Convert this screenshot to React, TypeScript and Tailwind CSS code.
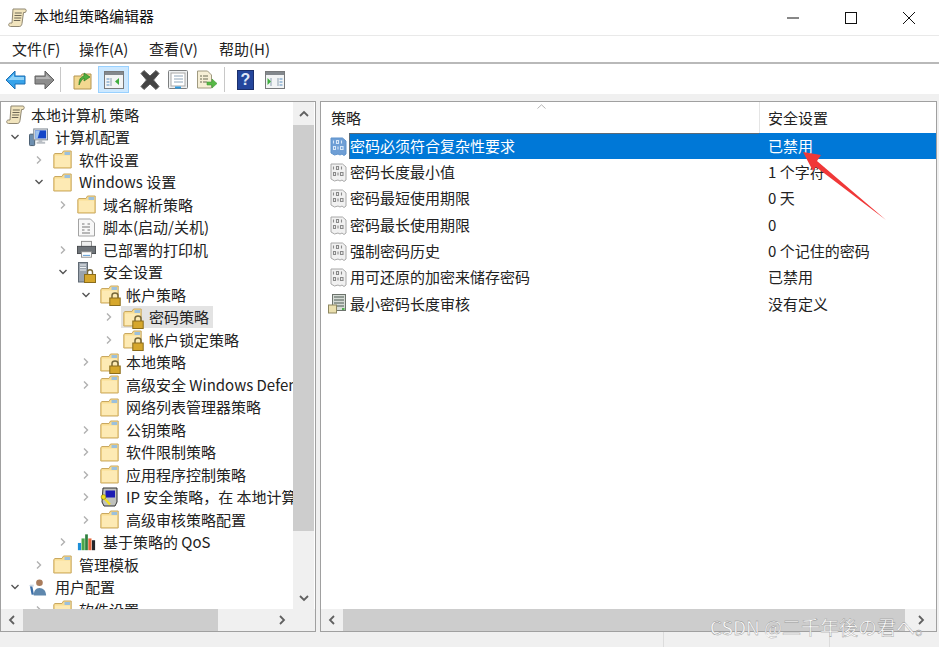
const levels = ["pl-[5px]", "pl-[7px]", "pl-[31px]", "pl-[55px]", "pl-[78px]", "pl-[101px]"];

function ScrollIcon() {
  return (
    <svg width="19" height="19" viewBox="0 0 19 19">
      <path d="M5 1h12c1.500 0 1.800 3 0 3.500h-1.500L14 15.500c-.3 2-1.200 3-2.800 3H2.500c-2.300 0-2.500-3.500 0-3.500H4z" fill="#f1e4bd" stroke="#8f8772" />
      <path d="M6.800 5h7M6.500 7.500h7M6.200 10h7M5.800 12.500h6.500" stroke="#6f6856" strokeWidth="1.100" />
    </svg>
  );
}

function Folder({ lock }: { lock?: boolean }) {
  return (
    <svg width="19" height="19" viewBox="0 0 19 19" className="overflow-visible">
      <path d="M.8 4.500V18h17.400V1H10.500L9 3.500H2z" fill="#f9dd92" stroke="#c9a860" />
      <path d="M2 5.500h15V17H2z" fill="#fdeab4" />
      <path d="M11.500 2h5.700v3h-5.700z" fill="#9cc0dc" />
      {lock && (
        <g>
          <path d="M12 13v-2.500c0-3.300 6-3.300 6 0V13" fill="none" stroke="#77683a" strokeWidth="1.500" />
          <rect x="9.800" y="13" width="10.400" height="7.500" fill="#d6a72c" stroke="#8b6d1c" />
        </g>
      )}
    </svg>
  );
}

function Computer() {
  return (
    <svg width="20" height="19" viewBox="0 0 20 19">
      <rect x="0.500" y="6" width="5.500" height="12" rx="1" fill="#6d8fb0" stroke="#44586c" />
      <rect x="5" y="0.500" width="14.500" height="11.500" fill="#e2e6ea" stroke="#7d8790" />
      <path d="M6.500 2h11.500v8.500H6.500z" fill="#1546c8" />
      <path d="M6.500 2h5l-2.500 8.500H6.500z" fill="#9ec2ee" />
      <path d="M10 12h4v2h3v2H8v-2h2z" fill="#b9bec4" />
    </svg>
  );
}

function ScriptDoc() {
  return (
    <svg width="19" height="19" viewBox="0 0 19 19">
      <path d="M1.500 1h12l4 4v13h-16z" fill="#f8f8f8" stroke="#a3a3a3" />
      <path d="M5 6h2.500M10.500 6h2.500M5 9h8M5 12h2.500M10.500 12h2.500M5 15h8" stroke="#777" />
    </svg>
  );
}

function Printer() {
  return (
    <svg width="21" height="19" viewBox="0 0 21 19">
      <rect x="5" y="0.500" width="11" height="7" fill="#efefef" stroke="#888" />
      <rect x="0.500" y="6" width="20" height="8" fill="#6e7378" stroke="#45484c" />
      <rect x="5" y="12" width="11" height="6" fill="#fff" stroke="#888" />
      <path d="M6.500 16h8" stroke="#4a90d0" />
    </svg>
  );
}

function ServerLock() {
  return (
    <svg width="19" height="21" viewBox="0 0 19 21">
      <rect x="1.500" y="0.500" width="9" height="19.500" fill="#9aa3ad" stroke="#616a74" />
      <path d="M3 3h6M3 5.500h6M3 8h6" stroke="#eef1f4" />
      <path d="M10.500 12.500v-2.500c0-3 5-3 5 0v2.500" fill="none" stroke="#77683a" strokeWidth="1.400" />
      <rect x="7.500" y="12.500" width="11" height="8" fill="#d6a72c" stroke="#8b6d1c" />
    </svg>
  );
}

function IpKey() {
  return (
    <svg width="19" height="20" viewBox="0 0 19 20">
      <path d="M3 1h14v14l-2 4H4l-2-4z" fill="#bfc1bd" stroke="#333" />
      <rect x="5.500" y="3.500" width="9.500" height="7" fill="#1c1cb4" />
      <path d="M2 9l3 3 5 5.500" stroke="#f2e01e" strokeWidth="2.200" fill="none" />
      <circle cx="3.500" cy="10" r="2.400" fill="#f2e01e" stroke="#6b6410" strokeWidth="0.500" />
    </svg>
  );
}

function Qos() {
  return (
    <svg width="21" height="19" viewBox="0 0 21 19">
      <rect x="1" y="10" width="3.500" height="8" fill="#1d8fd8" />
      <rect x="5" y="5" width="3.500" height="13" fill="#4aa84a" />
      <rect x="9" y="0.500" width="3" height="17.500" fill="#2f7f3f" />
      <rect x="12.500" y="5" width="3.500" height="13" fill="#e2643a" />
      <rect x="16.500" y="7" width="3.500" height="11" fill="#22252a" />
    </svg>
  );
}

function User() {
  return (
    <svg width="20" height="19" viewBox="0 0 20 19">
      <circle cx="11" cy="4.500" r="3.500" fill="#a97c5c" />
      <path d="M5 18c0-5 2-8 6-8s7 3 7 8z" fill="#5e87ad" />
      <path d="M2 7l2 10" stroke="#3a6ea8" strokeWidth="2.500" />
      <path d="M1 7.500h4" stroke="#cfd8e2" strokeWidth="2" />
    </svg>
  );
}

function PolicyItem({ selected }: { selected?: boolean }) {
  const ink = selected ? "#d7e7f8" : "#8a8a8a";
  return (
    <svg width="17" height="19" viewBox="0 0 17 19">
      <path d="M1 1h11.500L16 4v13l-2 1.500-2-1.500-2 1-2-1-3.500 1L1 16z" fill={selected ? "#6f9fd6" : "#f1f1f1"} stroke={selected ? "#5f93cc" : "#a8a8a8"} />
      <path d="M3.500 3.500v3M6.500 3.500h2v3h-2zM3.500 9.500h2v3h-2zM8 9.500v3M10.500 9.500h2.500v3h-2.500zM11.500 3.500v3" fill="none" stroke={ink} strokeWidth="1.100" />
    </svg>
  );
}

function ServerList() {
  return (
    <svg width="19" height="20" viewBox="0 0 19 20">
      <rect x="4.500" y="0.500" width="13" height="16" fill="#d6dbd6" stroke="#6c736c" />
      <path d="M6 3h10M6 6h10M6 9h10M6 12h10" stroke="#4d5a52" />
      <rect x="0.500" y="11" width="8" height="8" fill="#eadfae" stroke="#8e8760" />
      <rect x="14" y="14" width="2.500" height="2" fill="#4fb04f" />
    </svg>
  );
}

function Chevron({ open }: { open?: boolean }) {
  return (
    <svg width="14" height="12" viewBox="0 0 14 12" className="shrink-0">
      <path d={open ? "M3.500 4l3.500 3.500L10.500 4" : "M5 2.500L8.500 6 5 9.500"} fill="none" stroke={open ? "#555555" : "#b0b0b0"} strokeWidth="1.400" />
    </svg>
  );
}

function ScrollArrow({ d }: { d: string }) {
  return (
    <svg width="10" height="10" viewBox="0 0 10 10">
      <path d={d} fill="none" stroke="#606060" strokeWidth="1.800" />
    </svg>
  );
}

function ViewPane({ right }: { right?: boolean }) {
  return (
    <svg width="20" height="18" viewBox="0 0 20 18">
      <rect x="0.500" y="0.500" width="19" height="17" fill="#f2f4f5" stroke="#77797b" />
      <rect x="1" y="1" width="18" height="3" fill="#83888d" />
      <path d={right ? "M6 7v8M13 7v8" : "M7 7v8"} stroke="#8da0b0" />
      {right ? <path d="M2.500 7v7l3.500-3.500z" fill="#3fae3f" /> : <path d="M15 7v7l-4-3.500z" fill="#3fae3f" />}
      <path d={right ? "M14.500 8h3M14.500 11h3M14.500 14h3" : "M2.500 8h3M2.500 11h3M2.500 14h3"} stroke="#5b8fc4" strokeWidth="1.200" />
    </svg>
  );
}

const tree = [
  { level: 0, label: "本地计算机 策略", icon: <ScrollIcon /> },
  { level: 1, label: "计算机配置", icon: <Computer />, open: true },
  { level: 2, label: "软件设置", icon: <Folder />, closed: true },
  { level: 2, label: "Windows 设置", icon: <Folder />, open: true },
  { level: 3, label: "域名解析策略", icon: <Folder />, closed: true },
  { level: 3, label: "脚本(启动/关机)", icon: <ScriptDoc /> },
  { level: 3, label: "已部署的打印机", icon: <Printer />, closed: true },
  { level: 3, label: "安全设置", icon: <ServerLock />, open: true },
  { level: 4, label: "帐户策略", icon: <Folder lock />, open: true },
  { level: 5, label: "密码策略", icon: <Folder lock />, closed: true, selected: true },
  { level: 5, label: "帐户锁定策略", icon: <Folder lock />, closed: true },
  { level: 4, label: "本地策略", icon: <Folder lock />, closed: true },
  { level: 4, label: "高级安全 Windows Defender 防火墙", icon: <Folder />, closed: true },
  { level: 4, label: "网络列表管理器策略", icon: <Folder /> },
  { level: 4, label: "公钥策略", icon: <Folder />, closed: true },
  { level: 4, label: "软件限制策略", icon: <Folder />, closed: true },
  { level: 4, label: "应用程序控制策略", icon: <Folder />, closed: true },
  { level: 4, label: "IP 安全策略，在 本地计算机", icon: <IpKey />, closed: true },
  { level: 4, label: "高级审核策略配置", icon: <Folder />, closed: true },
  { level: 3, label: "基于策略的 QoS", icon: <Qos />, closed: true },
  { level: 2, label: "管理模板", icon: <Folder />, closed: true },
  { level: 1, label: "用户配置", icon: <User />, open: true },
  { level: 2, label: "软件设置", icon: <Folder />, closed: true },
];

const policies = [
  { name: "密码必须符合复杂性要求", value: "已禁用", selected: true },
  { name: "密码长度最小值", value: "1 个字符" },
  { name: "密码最短使用期限", value: "0 天" },
  { name: "密码最长使用期限", value: "0" },
  { name: "强制密码历史", value: "0 个记住的密码" },
  { name: "用可还原的加密来储存密码", value: "已禁用" },
  { name: "最小密码长度审核", value: "没有定义", server: true },
];

export default function App() {
  return (
    <div className="relative w-[939px] h-[647px] overflow-hidden flex flex-col bg-[#f0f0f0] text-[15px] text-[#222222] font-['Noto_Sans_CJK_SC','Noto_Sans',sans-serif]">
      {/* 标题栏 */}
      <div className="h-[36px] shrink-0 flex items-center bg-white border-b border-[#e9e9e9]">
        <div className="ml-[8px]"><ScrollIcon /></div>
        <span className="ml-[7px] mb-[2px] text-[#111111]">本地组策略编辑器</span>
        <div className="ml-auto mr-[1px] flex">
          <div className="w-[58px] h-[34px] flex items-center justify-center">
            <svg width="14" height="14" viewBox="0 0 14 14"><path d="M1 7h12" stroke="#111" strokeWidth="1" /></svg>
          </div>
          <div className="w-[58px] h-[34px] flex items-center justify-center">
            <svg width="14" height="14" viewBox="0 0 14 14"><rect x="1.500" y="1.500" width="11" height="11" fill="none" stroke="#111" /></svg>
          </div>
          <div className="w-[58px] h-[34px] flex items-center justify-center">
            <svg width="14" height="14" viewBox="0 0 14 14"><path d="M1 1l12 12M13 1L1 13" stroke="#111" strokeWidth="1" /></svg>
          </div>
        </div>
      </div>

      {/* 菜单栏 */}
      <div className="h-[28px] shrink-0 flex items-center bg-white border-b-2 border-[#b9b9b9] pl-[12px] pt-[1px] gap-[20px]">
        <span className="w-[47px] whitespace-nowrap">文件(F)</span>
        <span className="w-[50px] whitespace-nowrap">操作(A)</span>
        <span className="w-[50px] whitespace-nowrap">查看(V)</span>
        <span className="whitespace-nowrap">帮助(H)</span>
      </div>

      {/* 工具栏 */}
      <div className="h-[30px] shrink-0 flex items-center bg-white pl-[5px] pt-[1px]">
        <svg width="21" height="20" viewBox="0 0 21 20">
          <path d="M10 1L1 10l9 9v-5h10V6H10z" fill="#37a3ea" stroke="#1c6fb4" />
          <path d="M9 4L3 10h16V7H9z" fill="#8fd2f8" />
        </svg>
        <svg width="21" height="20" viewBox="0 0 21 20" className="ml-[8px]">
          <path d="M11 1l9 9-9 9v-5H1V6h10z" fill="#8d8d8d" stroke="#616161" />
          <path d="M12 4l5 5H2V7h10z" fill="#b4b4b4" />
        </svg>
        <div className="ml-[5px] w-px h-[25px] bg-[#c8c8c8]" />
        <svg width="20" height="20" viewBox="0 0 20 20" className="ml-[12px]">
          <path d="M1 6v13h17V4H9L8 6z" fill="#f3d890" stroke="#b59550" />
          <path d="M6 15c0-5 1-8 5-9V3l6 4-6 4V8c-2 1-3 3-5 7z" fill="#4fae3c" stroke="#2f7c25" strokeWidth="0.700" />
        </svg>
        <div className="ml-[5px] w-[31px] h-[27px] flex items-center justify-center bg-[#cce8ff] border border-[#99d1ff]">
          <ViewPane />
        </div>
        <svg width="22" height="20" viewBox="0 0 22 20" className="ml-[10px]">
          <path d="M2 3.500l3-3L11 6l6-5.500 3 3L14.500 10l5.500 6.500-3 3L11 14l-6 5.500-3-3L7.500 10z" fill="#444444" stroke="#5c5c5c" />
        </svg>
        <svg width="20" height="20" viewBox="0 0 20 20" className="ml-[7px]">
          <rect x="0.500" y="0.500" width="19" height="18" rx="1" fill="#eef0f1" stroke="#7d7f80" />
          <rect x="3" y="3" width="14" height="13" fill="#fff" stroke="#a8a8a8" />
          <path d="M6 6h9M6 9h9M6 12h9" stroke="#8ea4b8" />
          <path d="M7 17.500h6" stroke="#2f9ae0" strokeWidth="2" />
        </svg>
        <svg width="22" height="20" viewBox="0 0 22 20" className="ml-[8px]">
          <path d="M1.500 1h10l4 4v13h-14z" fill="#f6efd6" stroke="#a09a80" />
          <path d="M4 6h2M7 6h5M4 9h2M7 9h5M4 12h2M7 12h4" stroke="#6a6a55" />
          <path d="M11 12h5V9l5 4.500-5 4.500v-3h-5z" fill="#58b947" stroke="#3f9a35" strokeWidth="0.600" />
        </svg>
        <div className="ml-[6px] w-px h-[25px] bg-[#c8c8c8]" />
        <div className="ml-[12px] w-[17px] h-[20px] flex items-center justify-center bg-[#24469c] border border-[#1b2f6b] font-bold text-[16px] text-[#dfe6f7] font-['Liberation_Sans',sans-serif]">?</div>
        <div className="ml-[11px]"><ViewPane right /></div>
      </div>

      {/* 主体 */}
      <div className="flex-1 min-h-0 flex pt-[7px] gap-[4px] pr-[2px]">
        {/* 左侧树 */}
        <div className="w-[316px] shrink-0 flex flex-col border border-[#a0a0a0] bg-white">
          <div className="flex-1 min-h-0 flex">
            <div className="flex-1 min-w-0 overflow-hidden whitespace-nowrap pt-[1.5px]">
              {tree.map((row, i) => (
                <div key={i} className={`h-[22.5px] flex items-center ${levels[row.level]}`}>
                  {row.level > 0 && (row.open || row.closed ? <Chevron open={row.open} /> : <div className="w-[14px] shrink-0" />)}
                  <div className={`flex items-center h-[22px] pr-[4px] ${row.level > 0 ? "ml-[5px] pl-[2px]" : ""} ${row.selected ? "bg-[#e3e3e3]" : ""}`}>
                    <div className="w-[19px] shrink-0 flex justify-center">{row.icon}</div>
                    <span className={row.level > 0 ? "ml-[7px]" : "ml-[6px]"}>{row.label}</span>
                  </div>
                </div>
              ))}
            </div>
            <div className="w-[21px] mr-[1px] shrink-0 flex flex-col bg-[#f0f0f0]">
              <div className="h-[23px] flex items-center justify-center"><ScrollArrow d="M1 7l4-4 4 4" /></div>
              <div className="h-[406px] bg-[#cdcdcd]" />
              <div className="mt-auto h-[23px] flex items-center justify-center"><ScrollArrow d="M1 3l4 4 4-4" /></div>
            </div>
          </div>
          <div className="h-[22px] shrink-0 flex items-center bg-[#f0f0f0]">
            <div className="w-[22px] flex justify-center"><ScrollArrow d="M7 1L3 5l4 4" /></div>
            <div className="w-[195px] h-full bg-[#cdcdcd]" />
            <div className="ml-[54px] w-[19px] flex justify-center"><ScrollArrow d="M3 1l4 4-4 4" /></div>
          </div>
        </div>

        {/* 右侧列表 */}
        <div className="flex-1 min-w-0 flex flex-col border border-[#a0a0a0] bg-white">
          <div className="flex-1 min-h-0">
            <div className="relative h-[31px] flex items-center">
              <span className="w-[439px] pl-[10px] pt-[2px] border-r border-[#e5e5e5] h-full flex items-center">策略</span>
              <span className="pl-[8px] pt-[2px]">安全设置</span>
              <svg width="9" height="5" viewBox="0 0 9 5" className="absolute left-[216px] top-[2px]">
                <path d="M0.500 4.500L4.500 .8l4 3.700" fill="none" stroke="#b5b5b5" />
              </svg>
            </div>
            {policies.map((p) => (
              <div key={p.name} className="h-[26.3px] flex items-center">
                <div className="w-[28px] shrink-0 flex justify-end pr-[2px]">
                  {p.server ? <ServerList /> : <PolicyItem selected={p.selected} />}
                </div>
                <div className={`flex-1 h-full flex items-center ${p.selected ? "bg-[#0078d7] text-white" : ""}`}>
                  <span className={`w-[410px] h-full flex items-center ${p.selected ? "border-l border-t border-[#5a6a78]" : "pl-[1px]"}`}>{p.name}</span>
                  <span className="pl-[9px]">{p.value}</span>
                </div>
              </div>
            ))}
          </div>
          <div className="h-[22px] shrink-0 flex items-center bg-[#f0f0f0]">
            <div className="w-[22px] flex justify-center"><ScrollArrow d="M7 1L3 5l4 4" /></div>
            <div className="w-[562px] h-full bg-[#cdcdcd]" />
            <div className="ml-auto w-[30px] flex justify-center"><ScrollArrow d="M3 1l4 4-4 4" /></div>
          </div>
        </div>
      </div>

      {/* 状态栏 */}
      <div className="h-[15px] shrink-0 flex">
        <div className="w-[664px] border-r border-[#dcdcdc]" />
        <div className="w-[166px] border-r border-[#dcdcdc]" />
      </div>

      {/* 红色箭头 */}
      <svg width="939" height="647" viewBox="0 0 939 647" className="absolute left-0 top-0 pointer-events-none">
        <path d="M803 152L821 155 817 161 886 220 816 167 813 171z" fill="#f03838" />
      </svg>

      {/* 水印 */}
      <div className="absolute left-[710px] top-[614px] text-[19px] leading-[26px] whitespace-nowrap text-white [-webkit-text-stroke:0.35px_#8a8a8a] font-['Noto_Sans_CJK_JP',sans-serif]">
        CSDN @二千年後の君へ。
      </div>
    </div>
  );
}
